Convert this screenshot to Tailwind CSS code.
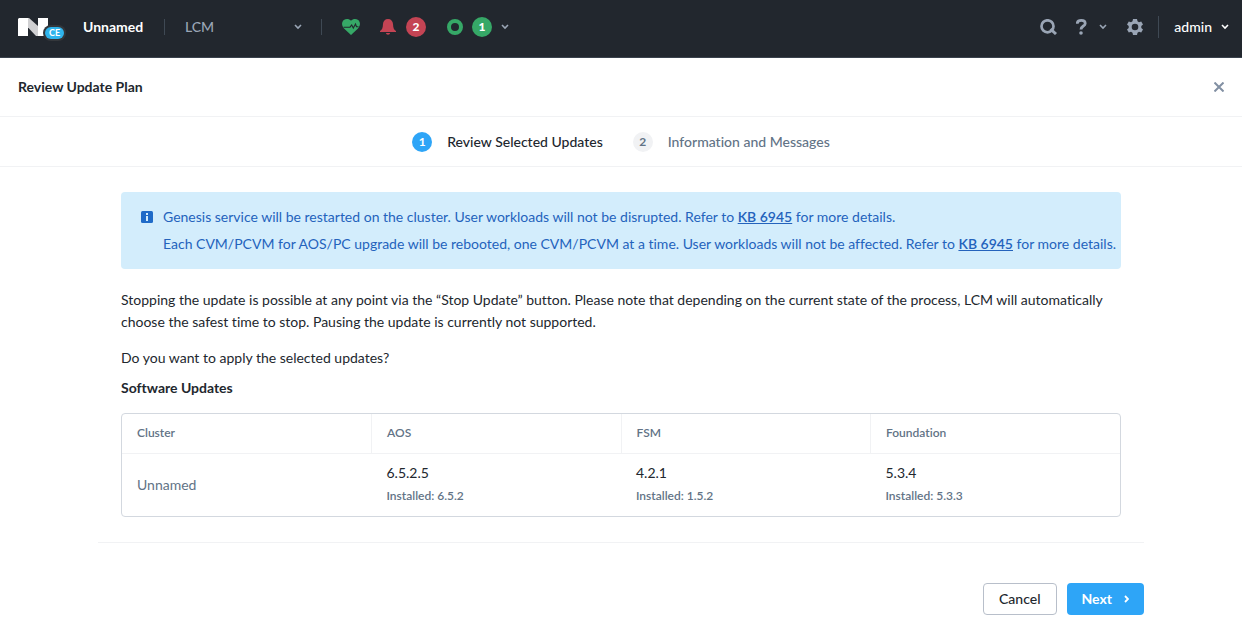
<!DOCTYPE html>
<html lang="en">
<head>
<meta charset="utf-8">
<meta name="viewport" content="width=device-width, initial-scale=1">
<title>Review Update Plan</title>
<script src="https://cdn.jsdelivr.net/npm/@tailwindcss/browser@4"></script>
</head>
<body class="min-h-screen bg-white font-['Lato','Open_Sans',sans-serif] text-[14px] leading-[22px] text-[#22272e] [font-variant-ligatures:none]">

<header class="flex h-[58px] items-center border-b border-[#3a424d] bg-[#22272e] pb-1 pl-[18px] pr-[13px] text-white">
  <a href="#" aria-label="Home" class="relative block h-[18px] w-[30px] shrink-0">
    <svg width="30" height="18" viewBox="0 0 30 18" aria-hidden="true">
      <path d="M0 1L1 0H10V18H0Z" fill="#fff"/><path d="M20 0H30V18H20Z" fill="#fff"/>
      <path d="M10 0H11L20 8V18H18L10 9.500Z" fill="#d0d0d2"/>
    </svg>
    <span class="absolute left-[27px] top-[9px] flex h-3 w-[19px] items-center justify-center rounded-full bg-[#2fb4ec] text-[9px] font-bold ring-2 ring-[#34373b]">CE</span>
  </a>
  <button type="button" class="ml-[35px] w-[61px] text-left font-bold">Unnamed</button>
  <span class="ml-5 h-4 w-px bg-[#3f4954]"></span>
  <div class="ml-5 grid w-[117px] items-center">
    <select aria-label="Section" class="col-start-1 row-start-1 w-full appearance-none bg-transparent font-medium text-[#9aa5b5]"><option>LCM</option></select>
    <svg class="pointer-events-none col-start-1 row-start-1 justify-self-end" width="8" height="6" viewBox="0 0 8 6" fill="none" stroke="#9aa5b5" stroke-width="1.6" aria-hidden="true"><path d="M1 1L4 4L7 1"/></svg>
  </div>
  <span class="ml-[19px] h-4 w-px bg-[#3f4954]"></span>
  <button type="button" aria-label="Health" class="ml-5">
    <svg width="18" height="16" viewBox="0 0 18 16" aria-hidden="true">
      <path d="M9 16L2 9.500C-.8 6.500-.3 2.600 1.800 1C4.200-.6 7.300-.1 9 1.700C10.700-.1 13.800-.6 16.200 1C18.300 2.600 18.800 6.500 16 9.500Z" fill="#36a867"/>
      <path d="M1.500 8.200H8L9.700 6L11.300 9L13.500 5L14.500 7.700H16.500" fill="none" stroke="#22272e" stroke-width="1.100"/>
    </svg>
  </button>
  <button type="button" aria-label="2 alerts" class="ml-5 flex items-center gap-[10px]">
    <svg width="16" height="16" viewBox="0 0 16 16" fill="#c44454" aria-hidden="true"><path d="M8 0C11 0 12.800 2 13 5C13.200 9 14 11 16 12V13H0V12C2 11 2.800 9 3 5C3.200 2 5 0 8 0ZM6 14H10C10 16.300 6 16.300 6 14Z"/></svg>
    <span class="flex size-5 items-center justify-center rounded-full bg-[#c44454] text-[12px] font-black">2</span>
  </button>
  <button type="button" aria-label="1 task" class="ml-[21px] flex items-center">
    <svg width="16" height="16" viewBox="0 0 16 16" aria-hidden="true"><circle cx="8" cy="8" r="6" fill="none" stroke="#36a867" stroke-width="4"/></svg>
    <span class="ml-[9px] flex size-5 items-center justify-center rounded-full bg-[#36a867] text-[12px] font-black">1</span>
    <svg class="ml-[9px]" width="8" height="6" viewBox="0 0 8 6" fill="none" stroke="#9aa5b5" stroke-width="1.600" aria-hidden="true"><path d="M1 1L4 4L7 1"/></svg>
  </button>
  <div class="ml-auto flex items-center">
    <button type="button" aria-label="Search">
      <svg width="17" height="16" viewBox="0 0 17 16" fill="none" stroke="#9aa5b5" stroke-width="2.700" aria-hidden="true"><circle cx="7.500" cy="7.300" r="6"/><path d="M10.500 10L16 15" stroke-width="3"/></svg>
    </button>
    <button type="button" aria-label="Help" class="ml-[19px] flex items-center gap-3">
      <svg width="11" height="16" viewBox="0 0 11 16" fill="none" stroke="#9aa5b5" stroke-width="2.800" aria-hidden="true"><path d="M1.200 4.800C1.300 2.400 3 1.400 5.200 1.400C7.600 1.400 9.200 2.500 9.200 4.400C9.200 7.300 5 6.800 5 10.600"/><circle cx="5" cy="14" r="1.800" fill="#9aa5b5" stroke="none"/></svg>
      <svg width="8" height="6" viewBox="0 0 8 6" fill="none" stroke="#9aa5b5" stroke-width="1.600" aria-hidden="true"><path d="M1 1L4 4L7 1"/></svg>
    </button>
    <button type="button" aria-label="Settings" class="ml-5">
      <svg width="16" height="16" viewBox="0 0 16 16" fill="#9aa5b5" fill-rule="evenodd" aria-hidden="true"><path d="M6 0H10L10.500 2.300L12 3.200L14.200 2.400L16 5.500L14.300 7.100V8.900L16 10.500L14.200 13.600L12 12.800L10.500 13.700L10 16H6L5.500 13.700L4 12.800L1.800 13.600L0 10.500L1.700 8.900V7.100L0 5.500L1.800 2.400L4 3.200L5.500 2.300ZM8 4.700A3.300 3.300 0 1 0 8 11.300A3.300 3.300 0 1 0 8 4.700Z"/></svg>
    </button>
    <span class="ml-[15px] h-[22px] w-px bg-[#3f4954]"></span>
    <button type="button" class="ml-[15px] flex items-center gap-[9px] font-medium">admin
      <svg width="8" height="6" viewBox="0 0 8 6" fill="none" stroke="#fff" stroke-width="1.600" aria-hidden="true"><path d="M1 1L4 4L7 1"/></svg>
    </button>
  </div>
</header>

<div class="flex h-[59px] items-center justify-between border-b border-[#f1f2f4] pl-[18px] pr-[18px]">
  <h1 class="font-bold">Review Update Plan</h1>
  <button type="button" aria-label="Close"><svg width="10" height="10" viewBox="0 0 10 10" fill="none" stroke="#8290a3" stroke-width="2" aria-hidden="true"><path d="M.5 .5L9.500 9.500M9.500 .5L.5 9.500"/></svg></button>
</div>

<ol class="flex h-[50px] items-center justify-center gap-[30px] border-b border-[#f1f2f4] font-medium">
  <li class="flex items-center gap-[15px]" aria-current="step"><span class="flex size-5 items-center justify-center rounded-full bg-[#2ea5f7] text-xs font-bold text-white">1</span>Review Selected Updates</li>
  <li class="flex items-center gap-[15px] text-[#627386]"><span class="flex size-5 items-center justify-center rounded-full bg-[#f1f2f4] text-xs font-bold">2</span>Information and Messages</li>
</ol>

<main class="mx-auto max-w-[1046px] pt-[25px]">
  <div class="px-[23px]">
    <div role="note" class="flex gap-[10px] rounded bg-[#d3edfc] pb-3 pl-5 pt-[11px] text-[#2463bc]">
      <svg class="mt-2 shrink-0" width="12" height="12" viewBox="0 0 12 12" aria-hidden="true"><rect width="12" height="12" rx="1.500" fill="#1f6bc8"/><path d="M5 2H7V4H5ZM5 5H7V10H5Z" fill="#d3edfc"/></svg>
      <div class="leading-[27px]">
        <p>Genesis service will be restarted on the cluster. User workloads will not be disrupted. Refer to <a href="#" class="font-semibold underline">KB 6945</a> for more details.</p>
        <p>Each CVM/PCVM for AOS/PC upgrade will be rebooted, one CVM/PCVM at a time. User workloads will not be affected. Refer to <a href="#" class="font-semibold underline">KB 6945</a> for more details.</p>
      </div>
    </div>
    <p class="mt-5">Stopping the update is possible at any point via the “Stop Update” button. Please note that depending on the current state of the process, LCM will automatically choose the safest time to stop. Pausing the update is currently not supported.</p>
    <p class="mt-[14px]">Do you want to apply the selected updates?</p>
    <h2 id="updates" class="mt-2 font-bold">Software Updates</h2>
    <div class="mt-[14px] rounded border border-[#d3d8df]">
      <table aria-labelledby="updates" class="w-full table-fixed text-left">
        <thead class="text-xs text-[#627386]">
          <tr class="h-[39px] border-b border-[#f1f2f4]">
            <th scope="col" class="border-r border-[#f1f2f4] px-[15px] font-semibold">Cluster</th>
            <th scope="col" class="border-r border-[#f1f2f4] px-[15px] font-semibold">AOS</th>
            <th scope="col" class="border-r border-[#f1f2f4] px-[15px] font-semibold">FSM</th>
            <th scope="col" class="px-[15px] font-semibold">Foundation</th>
          </tr>
        </thead>
        <tbody>
          <tr class="h-[63px]">
            <td class="px-[15px] text-[#627386]">Unnamed</td>
            <td class="px-[15px]"><p>6.5.2.5</p><p class="text-xs leading-6 font-semibold text-[#627386]">Installed: 6.5.2</p></td>
            <td class="px-[15px]"><p>4.2.1</p><p class="text-xs leading-6 font-semibold text-[#627386]">Installed: 1.5.2</p></td>
            <td class="px-[15px]"><p>5.3.4</p><p class="text-xs leading-6 font-semibold text-[#627386]">Installed: 5.3.3</p></td>
          </tr>
        </tbody>
      </table>
    </div>
  </div>
  <footer class="mt-[25px] flex justify-end gap-[10px] border-t border-[#f1f2f4] pt-10">
    <button type="button" class="h-8 rounded border border-[#b8bfca] px-[15px] font-medium">Cancel</button>
    <button type="button" class="flex h-8 items-center gap-3 rounded bg-[#2ea5f7] px-[15px] font-bold text-white">Next
      <svg width="5" height="8" viewBox="0 0 5 8" fill="none" stroke="#fff" stroke-width="1.800" aria-hidden="true"><path d="M1 1L4 4L1 7"/></svg>
    </button>
  </footer>
</main>
</body>
</html>
